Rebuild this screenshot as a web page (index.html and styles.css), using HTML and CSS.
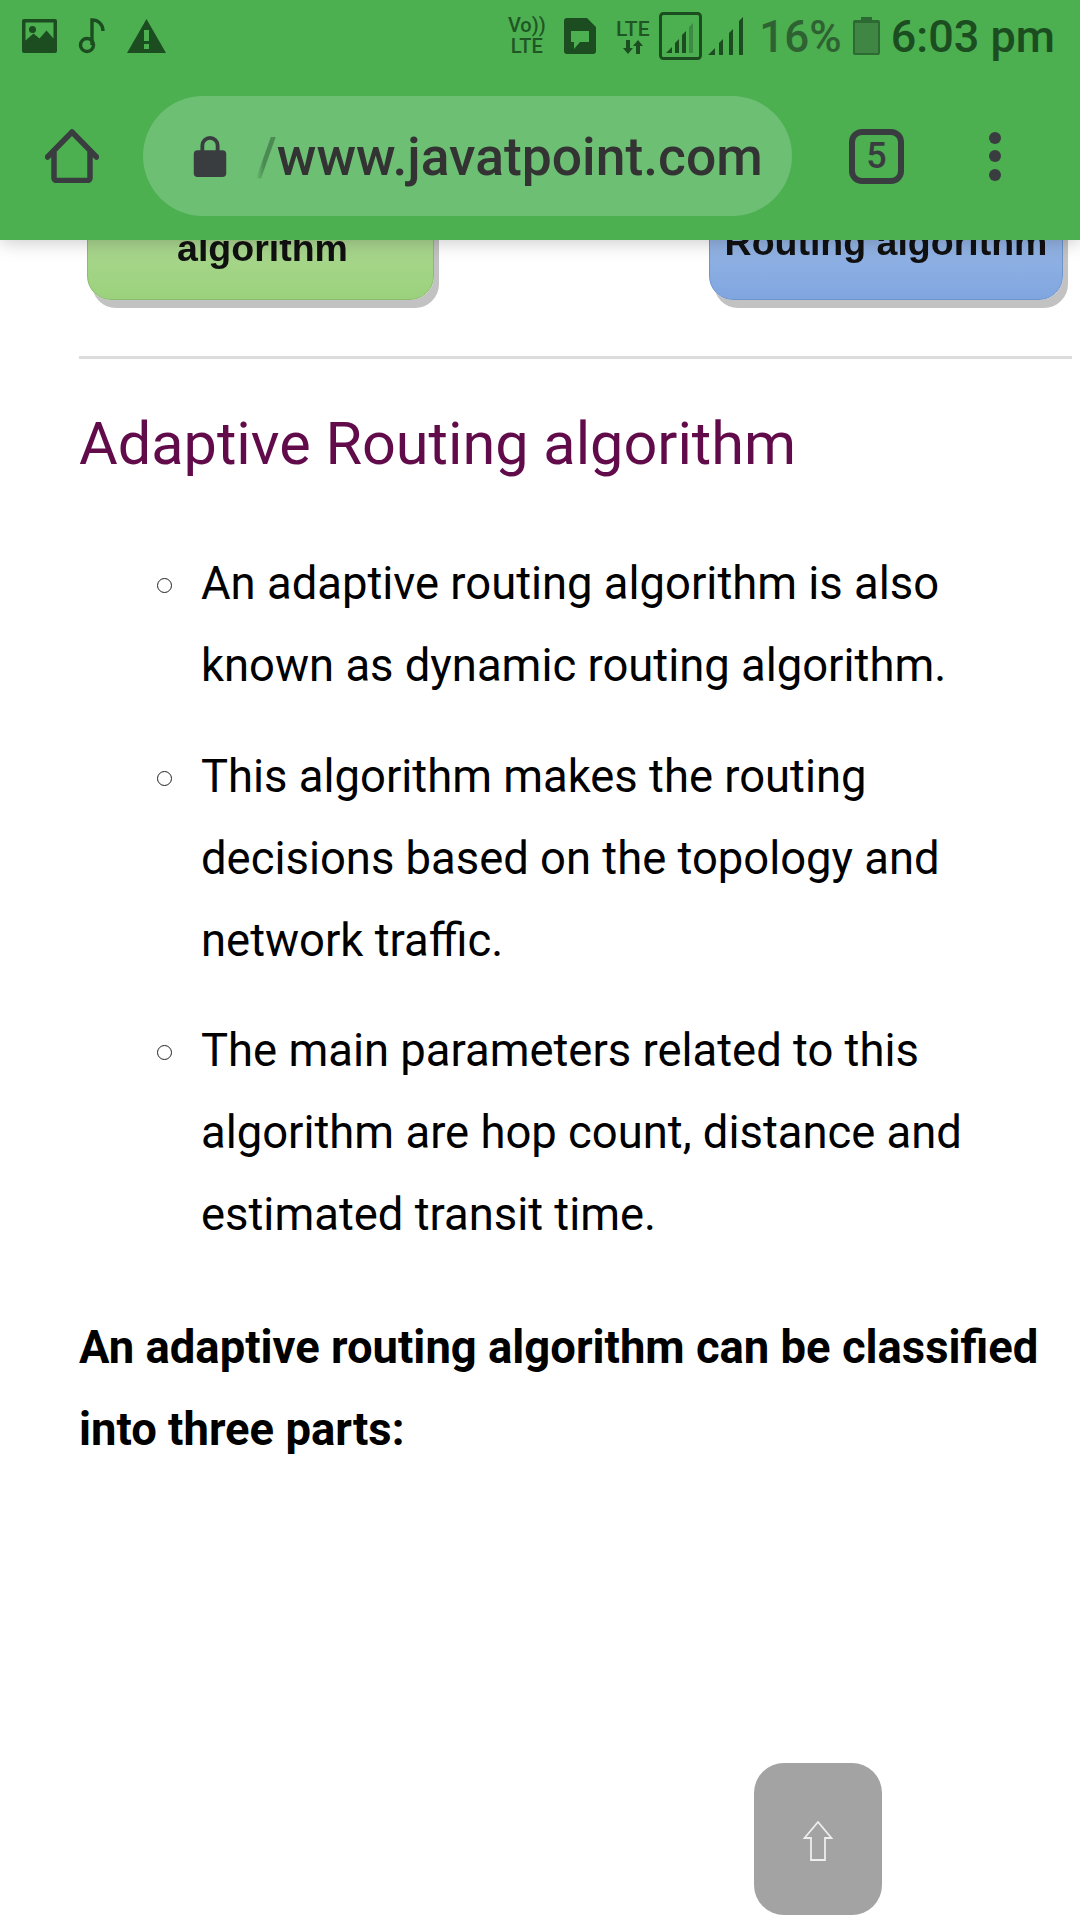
FILE: index.html
```html
<!DOCTYPE html>
<html lang="en">
<head>
<meta charset="utf-8">
<title>Adaptive Routing algorithm</title>
<link rel="stylesheet" href="styles.css">
</head>
<body>
<div class="screen">
  <header class="chrome">
    <div class="status">
      <div class="status-left">
        <svg class="ic-image" viewBox="0 0 35 34"><path fill="#1b4d20" fill-rule="evenodd" d="M2 0h31a2 2 0 0 1 2 2v30a2 2 0 0 1-2 2H2a2 2 0 0 1-2-2V2a2 2 0 0 1 2-2zM3.500 3.500v18l8-7 6 5 7-8 7 8v-16zM10.500 7a3.500 3.500 0 1 0 0 7 3.500 3.500 0 0 0 0-7z"/></svg>
        <svg class="ic-note" viewBox="0 0 28 36"><circle cx="9" cy="27" r="6.500" fill="none" stroke="#1b4d20" stroke-width="3.400"/><path fill="none" stroke="#1b4d20" stroke-width="3.400" d="M14 27V2c6 0 11 4 11 11"/></svg>
        <svg class="ic-warn" viewBox="0 0 39 34"><path fill="#1b4d20" fill-rule="evenodd" d="M19.500 0 39 34H0zM17 11v11h5V11zM17 25v5h5v-5z"/></svg>
      </div>
      <div class="status-right">
        <div class="volte"><span>Vo))</span><span>LTE</span></div>
        <svg class="ic-sim" viewBox="0 0 32 36"><path fill="#1b4d20" fill-rule="evenodd" d="M3 0h20l9 9v24a3 3 0 0 1-3 3H3a3 3 0 0 1-3-3V3a3 3 0 0 1 3-3zM7 13v11h3v7l6-7h9V13z"/></svg>
        <div class="lte"><span>LTE</span><svg class="ic-updown" viewBox="0 0 24 14"><path fill="#1b4d20" d="M5 0h4v8h3l-5 6-5-6h3zM15 14h4V6h3l-5-6-5 6h3z"/></svg></div>
        <svg class="ic-box" viewBox="0 0 43 48"><rect x="1.500" y="1.500" width="40" height="45" rx="3" fill="none" stroke="#1b4d20" stroke-width="3"/><path fill="#1b4d20" d="M7 41l6-6v6zM16 41v-10l4-4v14zM23 41V23l4-4v22z"/><path fill="#3d8a44" d="M30 41V15l4-4v30z"/></svg>
        <svg class="ic-signal" viewBox="0 0 37 38"><path fill="#1b4d20" d="M0 38l7-7v7zM11 38V26l4-4v16zM21 38V16l4-4v26zM31 38V4l4-4v38z"/></svg>
        <span class="pct">16%</span>
        <svg class="ic-batt" viewBox="0 0 27 38"><path fill="#2d6a33" fill-rule="evenodd" d="M8 0h11v3h6a2 2 0 0 1 2 2v31a2 2 0 0 1-2 2H2a2 2 0 0 1-2-2V5a2 2 0 0 1 2-2h6z"/><rect x="2" y="6" width="23" height="30" fill="#3f8544"/></svg>
        <span class="clock">6:03 pm</span>
      </div>
    </div>
    <div class="toolbar">
      <svg class="ic-home" viewBox="0 0 54 54"><path fill="none" stroke="#3a3d40" stroke-width="5.500" stroke-linecap="round" stroke-linejoin="round" d="M2.500 28 27 3l24.500 25M9 23v26a2.500 2.500 0 0 0 2.500 2.500h31A2.500 2.500 0 0 0 45 49V23"/></svg>
      <div class="omnibox">
        <svg class="ic-lock" viewBox="0 0 34 44"><path fill="#3a3d40" d="M4 16h3v-5a10 10 0 0 1 20 0v5h3a4 4 0 0 1 4 4v20a4 4 0 0 1-4 4H4a4 4 0 0 1-4-4V20a4 4 0 0 1 4-4zm7 0h12v-5a6 6 0 0 0-12 0z"/></svg>
        <div class="url"><span class="url-scheme">/</span>www.javatpoint.com</div>
      </div>
      <div class="tabs">5</div>
      <div class="menu"><i></i><i></i><i></i></div>
    </div>
  </header>
  <main class="article">
    <div class="diagram">
      <div class="node node-green">algorithm</div>
      <div class="node node-blue">Routing algorithm</div>
    </div>
    <hr class="rule">
    <h2 class="title">Adaptive Routing algorithm</h2>
    <ul class="points">
      <li>An adaptive routing algorithm is also known as dynamic routing algorithm.</li>
      <li>This algorithm makes the routing decisions based on the topology and network traffic.</li>
      <li>The main parameters related to this algorithm are hop count, distance and estimated transit time.</li>
    </ul>
    <p class="lead">An adaptive routing algorithm can be classified into three parts:</p>
  </main>
  <div class="to-top">
    <svg class="ic-up" viewBox="0 0 30 40"><path fill="none" stroke="#eeeeee" stroke-width="1.800" d="M15 1 1.500 17H8v22h14V17h6.500z"/></svg>
  </div>
</div>
</body>
</html>
```

FILE: styles.css
```css
html, body { margin: 0; padding: 0; background: #fff; }
.screen {
  position: relative;
  width: 1080px;
  height: 1920px;
  overflow: hidden;
  font-family: Roboto, "Liberation Sans", sans-serif;
  color: #000;
}
.chrome {
  position: relative;
  z-index: 2;
  height: 240px;
  background: #4caf50;
  box-shadow: 0 2px 18px rgba(0, 0, 0, 0.22);
  display: flex;
  flex-direction: column;
}
.status {
  height: 72px;
  display: flex;
  justify-content: space-between;
  align-items: center;
  padding: 0 25px 0 22px;
}
.status-left, .status-right { display: flex; align-items: center; }
.ic-image { width: 35px; height: 34px; }
.ic-note { width: 28px; height: 36px; margin-left: 21px; }
.ic-warn { width: 39px; height: 34px; margin-left: 21px; }
.volte {
  width: 37px;
  display: flex;
  flex-direction: column;
  align-items: center;
  font-size: 20px;
  line-height: 21px;
  font-weight: 500;
  color: #1f5624;
}
.ic-sim { width: 32px; height: 36px; margin-left: 19px; }
.lte {
  width: 39px;
  margin-left: 17px;
  display: flex;
  flex-direction: column;
  align-items: center;
  font-size: 21px;
  line-height: 21px;
  font-weight: 500;
  color: #1f5624;
}
.ic-updown { width: 24px; height: 14px; }
.ic-box { width: 43px; height: 48px; margin-left: 7px; }
.ic-signal { width: 37px; height: 38px; margin-left: 6px; }
.pct {
  margin-left: 14px;
  font-size: 44px;
  line-height: 50px;
  font-weight: 500;
  color: #2f6233;
  padding-top: 2px;
}
.ic-batt { width: 27px; height: 38px; margin-left: 11px; }
.clock {
  margin-left: 11px;
  font-size: 45px;
  line-height: 50px;
  font-weight: 500;
  color: #1b4d20;
  padding-top: 2px;
}
.toolbar {
  height: 120px;
  margin-top: 24px;
  display: flex;
  align-items: center;
  padding-left: 45px;
}
.ic-home { width: 54px; height: 54px; }
.omnibox {
  width: 649px;
  height: 120px;
  margin-left: 44px;
  border-radius: 60px;
  background: #6cbf73;
  display: flex;
  align-items: center;
  padding-left: 50px;
  box-sizing: border-box;
}
.ic-lock { width: 34px; height: 42px; }
.url {
  margin: 2px 0 0 29px;
  font-size: 53.400px;
  line-height: 60px;
  font-weight: 500;
  color: #333;
  white-space: nowrap;
}
.url-scheme {
  background: linear-gradient(90deg, #6cbf73 0%, #4b8a52 38%);
  -webkit-background-clip: text;
  background-clip: text;
  color: transparent;
}
.tabs {
  width: 55px;
  height: 55px;
  margin-left: 57px;
  box-sizing: border-box;
  border: 6px solid #3a3d40;
  border-radius: 13px;
  display: flex;
  align-items: center;
  justify-content: center;
  font-size: 36px;
  font-weight: 500;
  color: #3a3d40;
}
.menu {
  margin-left: 85px;
  display: flex;
  flex-direction: column;
  gap: 6.500px;
}
.menu i {
  display: block;
  width: 12px;
  height: 12px;
  border-radius: 50%;
  background: #3a3d40;
}
.article { padding: 0 8px 0 79px; }
.diagram {
  height: 68px;
  margin-left: 8px;
  margin-right: 3px;
  display: flex;
  justify-content: space-between;
  align-items: flex-end;
  overflow: hidden;
}
.node {
  box-sizing: border-box;
  height: 110px;
  margin: 0 6px 8px 0;
  border-radius: 24px;
  box-shadow: 5px 8px 0 #c2c2c2;
  text-align: center;
  font-family: "Liberation Sans", sans-serif;
  font-size: 37.500px;
  font-weight: 700;
  line-height: 40px;
  color: #111;
  filter: blur(0.7px);
}
.node-green {
  width: 347px;
  padding: 37px 0 0 4px;
  background: linear-gradient(#b7dca0, #9bd17c);
  border: 1px solid #8abb6e;
}
.node-blue {
  width: 354px;
  padding-top: 31px;
  background: linear-gradient(#a5c0e8, #80a6e0);
  border: 1px solid #6e94cc;
}
.rule {
  margin: 48px 0 0;
  height: 3px;
  border: 0;
  background: #dcdcdc;
}
.title {
  margin: 48px 0 0;
  font-size: 59.400px;
  line-height: 74px;
  font-weight: 400;
  color: #610b4b;
}
.points {
  margin: 62px 0 0;
  padding: 0 60px 0 122px;
  list-style: none;
  font-size: 45.400px;
  line-height: 82px;
}
.points li { position: relative; }
.points li::before {
  content: "";
  position: absolute;
  left: -44px;
  top: 35px;
  width: 15px;
  height: 15px;
  box-sizing: border-box;
  border: 1.500px solid #222;
  border-radius: 50%;
}
.points li + li { margin-top: 28.500px; }
.lead {
  margin: 51px 0 0;
  font-size: 45.400px;
  line-height: 82px;
  font-weight: 700;
}
.to-top {
  position: absolute;
  left: 754px;
  top: 1763px;
  width: 128px;
  height: 152px;
  padding-top: 4px;
  box-sizing: border-box;
  border-radius: 30px;
  background: #a3a3a3;
  display: flex;
  align-items: center;
  justify-content: center;
}
.ic-up { width: 30px; height: 40px; }
```
